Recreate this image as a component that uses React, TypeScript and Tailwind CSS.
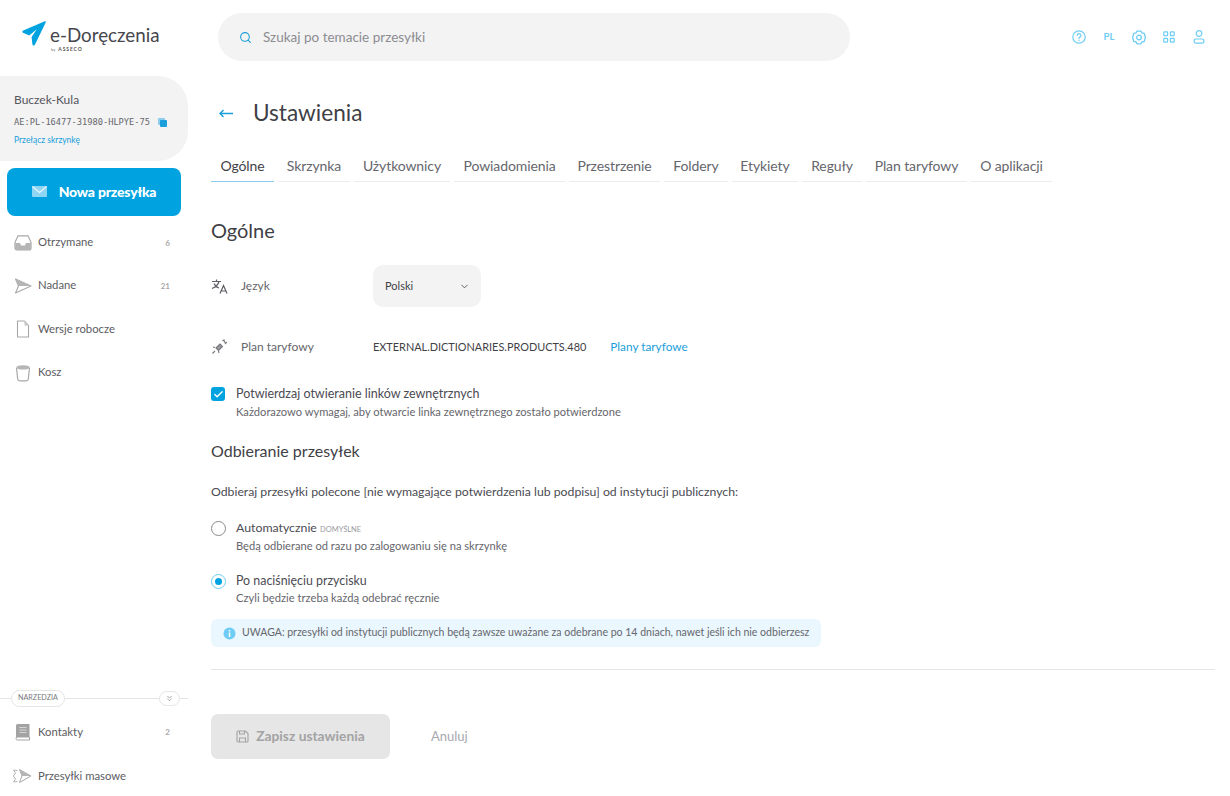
import React from "react";
import { Search, ChevronDown, Check, ChevronsDown } from "lucide-react";

const font = { fontFamily: "Lato, 'Noto Sans', sans-serif" };

function Logo() {
  return (
    <div className="flex flex-col">
      <div className="flex items-center gap-[4px]">
        <svg width="24" height="25" viewBox="0 0 24 25">
          <path d="M22.8 0.3 L1.2 9.6 C0.2 10.1 0.1 11.3 1 11.8 L7.2 14.6 L14.8 8.2 L9.6 16 L10.4 23.2 C10.6 24.8 12.4 25 13 23.6 L23.7 1.4 C24 0.6 23.5 0 22.8 0.3 Z" fill="#00a3e0" />
        </svg>
        <span className="text-[18.8px] leading-none text-[#46464c] mt-[3px]">e-Doręczenia</span>
      </div>
      <div className="ml-[29px] flex items-center gap-[3px] mt-[1px]">
        <span className="text-[4px] leading-none text-[#777]">by</span>
        <span className="text-[5px] leading-none text-[#555] font-bold tracking-[0.9px]">ASSECO</span>
      </div>
    </div>
  );
}

function Inbox() {
  return (
    <svg width="18" height="18" viewBox="0 0 18 18" fill="none">
      <path d="M4 1.800h10l3 6.500v5.700a2 2 0 0 1-2 2H3a2 2 0 0 1-2-2V8.300z" stroke="#a8a8a8" strokeWidth="1.200" />
      <path d="M1.200 9H6l1 2.500h4L12 9h4.800v5a2 2 0 0 1-2 2H3.200a2 2 0 0 1-2-2z" fill="#b5b5b5" />
    </svg>
  );
}
function Sent() {
  return (
    <svg width="18" height="18" viewBox="0 0 18 18" fill="none">
      <path d="M1.500 2l15.500 7-15.500 7 3-7z" stroke="#a8a8a8" strokeWidth="1.100" strokeLinejoin="round" />
      <path d="M1.500 2l15.500 7H4.500z" fill="#b5b5b5" />
    </svg>
  );
}
function Doc() {
  return (
    <svg width="18" height="18" viewBox="0 0 18 18" fill="none">
      <path d="M3.500 1h7l4 4.500v11.500h-11z" stroke="#a8a8a8" strokeWidth="1.100" strokeLinejoin="round" />
      <path d="M10.500 1v4.500h4" fill="#c5c5c5" />
    </svg>
  );
}
function Trash() {
  return (
    <svg width="18" height="18" viewBox="0 0 18 18" fill="none">
      <path d="M2.500 4l1.200 11a2 2 0 0 0 2 1.800h6.600a2 2 0 0 0 2-1.800L15.500 4" stroke="#a8a8a8" strokeWidth="1.200" />
      <ellipse cx="9" cy="3.400" rx="6.700" ry="2.200" fill="#b5b5b5" />
    </svg>
  );
}
function Book() {
  return (
    <svg width="18" height="18" viewBox="0 0 18 18" fill="none">
      <path d="M2 2.500A1.500 1.500 0 0 1 3.500 1H15.500v13H3.500A1.500 1.500 0 0 0 2 15.500z" fill="#a3a3a3" />
      <path d="M2 15.500A1.500 1.500 0 0 1 3.500 14H15.500v3H3.500A1.500 1.500 0 0 1 2 15.500z" stroke="#a3a3a3" strokeWidth="1" />
      <path d="M5.500 4.500h7M5.500 7h7M5.500 9.500h7" stroke="#d5d5d5" strokeWidth="1" />
    </svg>
  );
}
function Bulk() {
  return (
    <svg width="20" height="18" viewBox="0 0 20 18" fill="none" className="-ml-[2px]">
      <path d="M7.500 2.500l11.500 6.500-11.500 6.500 2.500-6.500z" stroke="#a8a8a8" strokeWidth="1" strokeLinejoin="round" />
      <path d="M7.500 2.500l11.500 6.500H10z" fill="#b5b5b5" />
      <path d="M5.500 3.500L1.500 3l2 3-2 3 2 3-2 3 4-.5" stroke="#b5b5b5" strokeWidth="1" />
    </svg>
  );
}

function NavItem({ icon, label, count, h = "h-[43.3px]" }: { icon: React.ReactNode; label: string; count?: string; h?: string }) {
  return (
    <div className={`flex items-center pl-[14px] pr-[18px] ${h}`}>
      <span className="w-[24px] flex justify-start">{icon}</span>
      <span className="text-[11.3px] text-[#5c5c62]">{label}</span>
      {count && <span className="ml-auto text-[8px] font-bold text-[#a8a8a8]">{count}</span>}
    </div>
  );
}

function Tab({ label, active, w }: { label: string; active?: boolean; w: string }) {
  return (
    <div className={`${w} h-[32px] flex items-center justify-center border-b ${active ? "border-[#8ccdee] text-[#3f3f46]" : "border-[#ececec] text-[#66666c]"} text-[14px] tracking-[-0.1px]`}>
      {label}
    </div>
  );
}

function TopIcons() {
  const c = "#6fcdf5";
  return (
    <div className="flex items-center gap-[16px] text-[#6fcdf5]">
      <svg width="14" height="14" viewBox="0 0 14 14" fill="none" stroke={c} strokeWidth="1.200">
        <circle cx="7" cy="7" r="6.200" />
        <path d="M5.300 5.500a1.800 1.800 0 1 1 2.600 1.600c-.6.3-.9.7-.9 1.300" strokeLinecap="round" />
        <path d="M7 10v.6" strokeLinecap="round" />
      </svg>
      <span className="w-[14px] text-center text-[9.5px] font-bold">PL</span>
      <svg width="14" height="15" viewBox="0 0 14 15" fill="none" stroke={c} strokeWidth="1.300">
        <path d="M5 1.200h4l1 1.700 2.200.4 1.200 4.200-1.200 4-2.200.4-1 1.900H5l-1-1.900-2.200-.4L.6 7.500l1.200-4.200L4 2.900z" strokeLinejoin="round" />
        <circle cx="7" cy="7.500" r="2.300" />
      </svg>
      <svg width="14" height="12" viewBox="-1 0 14 12" fill="none" stroke={c} strokeWidth="1.200">
        <rect x=".8" y=".8" width="3.800" height="3.800" rx=".6" />
        <rect x="7.400" y=".8" width="3.800" height="3.800" rx=".6" />
        <rect x=".8" y="7.400" width="3.800" height="3.800" rx=".6" />
        <rect x="7.400" y="7.400" width="3.800" height="3.800" rx=".6" />
      </svg>
      <svg width="14" height="14" viewBox="-1 0 14 14" fill="none" stroke={c} strokeWidth="1.200">
        <circle cx="6" cy="3.500" r="2.800" />
        <rect x="1" y="9" width="10" height="4.200" rx="2.100" />
      </svg>
    </div>
  );
}

export default function App() {
  return (
    <div className="w-[1230px] h-[796px] overflow-hidden bg-white flex text-[#3f3f46]" style={font}>
      <aside className="w-[188px] shrink-0 flex flex-col">
        <div className="h-[76px] pl-[22px] pt-[21px]">
          <Logo />
        </div>
        <div className="h-[85px] bg-[#f3f3f3] rounded-r-[30px] pl-[14px] pt-[16px]">
          <div className="text-[12px] leading-[16px] text-[#55555c]">Buczek-Kula</div>
          <div className="flex items-center gap-[8px] mt-[8px]">
            <span className="text-[8.7px] leading-[12px] text-[#66666c]" style={{ fontFamily: "'DejaVu Sans Mono', monospace" }}>AE:PL-16477-31980-HLPYE-75</span>
            <svg width="9" height="9" viewBox="0 0 9 9">
              <rect x="0" y="0" width="7" height="7" rx="1" fill="#8ccdee" />
              <rect x="2" y="2" width="7" height="7" rx="1" fill="#1b9fdc" />
            </svg>
          </div>
          <div className="text-[8.5px] leading-[12px] text-[#1b9fdc] mt-[6px]">Przełącz skrzynkę</div>
        </div>
        <div className="mx-[7px] mt-[7px] h-[48px] rounded-lg bg-[#00a3e0] flex items-center justify-center gap-[12px] text-white pb-[1px]">
          <svg width="15" height="11" viewBox="0 0 15 11">
            <rect width="15" height="11" rx="1" fill="#8fd6f5" />
            <path d="M0.500 0.500L7.500 6.500L14.500 0.500" stroke="#e8f7fd" strokeWidth="1.200" fill="none" />
          </svg>
          <span className="text-[14px] font-black tracking-[-0.2px]">Nowa przesyłka</span>
        </div>
        <div className="mt-[5px]">
          <NavItem icon={<Inbox />} label="Otrzymane" count="6" />
          <NavItem icon={<Sent />} label="Nadane" count="21" />
          <NavItem icon={<Doc />} label="Wersje robocze" />
          <NavItem icon={<Trash />} label="Kosz" />
        </div>
        <div className="mt-auto relative h-[18px] flex items-center mb-[3px]">
          <div className="w-full border-t border-[#e5e5e5]" />
          <span className="absolute left-[11px] h-[17px] px-[6px] rounded-full border border-[#e5e5e5] bg-white flex items-center text-[7.2px] text-[#77777c]">NARZEDZIA</span>
          <span className="absolute left-[159px] w-[21px] h-[15px] rounded-full border border-[#e5e5e5] bg-white flex items-center justify-center">
            <ChevronsDown size={9} className="text-[#888]" />
          </span>
        </div>
        <NavItem icon={<Book />} label="Kontakty" count="2" h="h-[44px]" />
        <NavItem icon={<Bulk />} label="Przesyłki masowe" h="h-[44px] -mb-[2px]" />
      </aside>
      <main className="flex-1 min-w-0 flex flex-col pl-[23px]">
        <div className="h-[76px] flex items-start pt-[13px] pr-[24px]">
          <div className="ml-[7px] w-[632px] h-[48px] rounded-[24px] bg-[#f3f3f3] flex items-center pl-[21px] gap-[11px]">
            <Search size={13} className="text-[#1b9fdc]" />
            <span className="text-[13.5px] text-[#8c8c92]">Szukaj po temacie przesyłki</span>
          </div>
          <div className="ml-auto h-[48px] flex items-center">
            <TopIcons />
          </div>
        </div>
        <div className="flex items-center h-[32px] mt-[21px]">
          <svg width="14" height="9" viewBox="0 0 14 9" fill="none" stroke="#1b9fdc" strokeWidth="1.400" className="ml-[8px]">
            <path d="M14 4.500H1M4.500 1L1 4.500 4.500 8" />
          </svg>
          <h1 className="ml-[20px] text-[22.6px] font-normal text-[#3f3f46]">Ustawienia</h1>
        </div>
        <div className="flex gap-[4px] mt-[21px]">
          <Tab label="Ogólne" active w="w-[63px]" />
          <Tab label="Skrzynka" w="w-[72px]" />
          <Tab label="Użytkownicy" w="w-[96px]" />
          <Tab label="Powiadomienia" w="w-[111px]" />
          <Tab label="Przestrzenie" w="w-[91px]" />
          <Tab label="Foldery" w="w-[64px]" />
          <Tab label="Etykiety" w="w-[66px]" />
          <Tab label="Reguły" w="w-[60px]" />
          <Tab label="Plan taryfowy" w="w-[101px]" />
          <Tab label="O aplikacji" w="w-[81px]" />
        </div>
        <h2 className="text-[20px] leading-[24px] mt-[36px] text-[#3f3f46]">Ogólne</h2>
        <div className="flex items-center h-[42px] mt-[23px]">
          <svg width="18" height="15" viewBox="0 0 18 15" fill="none" stroke="#5f5f66" strokeWidth="1.200" className="mr-[12px]">
            <path d="M1 2.500h9M5.500.5v2M8 2.500c-.8 3-3 5.500-7 7M3 4.500c1 2 3 4 5 4.500" />
            <path d="M9 14.500l3.500-8 3.500 8M10.200 12h4.600" />
          </svg>
          <span className="text-[12px] text-[#66666c] w-[132px]">Język</span>
          <div className="w-[108px] h-[42px] rounded-[10px] bg-[#f3f3f3] flex items-center justify-between pl-[12px] pr-[11px]">
            <span className="text-[11px] text-[#3f3f46]">Polski</span>
            <ChevronDown size={11} className="text-[#55555c]" />
          </div>
        </div>
        <div className="flex items-center h-[20px] mt-[30px]">
          <svg width="16" height="16" viewBox="0 0 16 16" fill="none" stroke="#77777c" strokeWidth="1.100" className="mr-[14px]">
            <path d="M5 9l4-4 2.500 2.500-4 4z" fill="#9a9aa0" />
            <path d="M1.500 14.500l2.500-2.500M11.500 2l1.500-1 .5 2 2 .5-1.500 1.500M2 8l2 .5M8 14l-.5-2" />
          </svg>
          <span className="text-[12px] text-[#66666c] w-[132px]">Plan taryfowy</span>
          <span className="text-[10.9px] text-[#3f3f46]">EXTERNAL.DICTIONARIES.PRODUCTS.480</span>
          <span className="text-[11.8px] text-[#1b9fdc] ml-[24px]">Plany taryfowe</span>
        </div>
        <div className="flex mt-[29px]">
          <span className="w-[14px] h-[14px] rounded-[3px] bg-[#00a3e0] flex items-center justify-center mt-[1px] mr-[11px]">
            <Check size={11} strokeWidth={3} className="text-white" />
          </span>
          <div>
            <div className="text-[12.5px] leading-[16px] text-[#4b4b52]">Potwierdzaj otwieranie linków zewnętrznych</div>
            <div className="text-[11.15px] leading-[14px] mt-[3px] text-[#66666c]">Każdorazowo wymagaj, aby otwarcie linka zewnętrznego zostało potwierdzone</div>
          </div>
        </div>
        <h3 className="text-[16px] leading-[20px] mt-[22px] text-[#3f3f46]">Odbieranie przesyłek</h3>
        <p className="text-[12.25px] leading-[16px] mt-[23px] text-[#4b4b52]">Odbieraj przesyłki polecone [nie wymagające potwierdzenia lub podpisu] od instytucji publicznych:</p>
        <div className="flex mt-[20px]">
          <span className="w-[15px] h-[15px] rounded-full border border-[#8a8a8a] mt-[1px] mr-[10px]" />
          <div>
            <div className="text-[12.3px] leading-[16px] text-[#4b4b52]">Automatycznie <span className="text-[7.5px] text-[#9a9aa0]">DOMYŚLNE</span></div>
            <div className="text-[11.15px] leading-[14px] mt-[1px] text-[#66666c]">Będą odbierane od razu po zalogowaniu się na skrzynkę</div>
          </div>
        </div>
        <div className="flex mt-[20px]">
          <span className="w-[15px] h-[15px] rounded-full border border-[#6fcdf5] mt-[1px] mr-[10px] flex items-center justify-center">
            <span className="w-[7px] h-[7px] rounded-full bg-[#00a3e0]" />
          </span>
          <div>
            <div className="text-[12.4px] leading-[16px] text-[#4b4b52]">Po naciśnięciu przycisku</div>
            <div className="text-[11.2px] leading-[14px] mt-[2px] text-[#66666c]">Czyli będzie trzeba każdą odebrać ręcznie</div>
          </div>
        </div>
        <div className="w-[610px] h-[28px] rounded-[6px] bg-[#eaf7fe] flex items-center pl-[12px] gap-[6px] mt-[14px]">
          <svg width="13" height="13" viewBox="0 0 13 13">
            <circle cx="6.500" cy="6.500" r="6" fill="#6fcdf5" />
            <rect x="5.800" y="5.500" width="1.500" height="4.500" fill="#fff" />
            <rect x="5.800" y="3" width="1.500" height="1.500" fill="#fff" />
          </svg>
          <span className="text-[10.54px] text-[#66666c]">UWAGA: przesyłki od instytucji publicznych będą zawsze uważane za odebrane po 14 dniach, nawet jeśli ich nie odbierzesz</span>
        </div>
        <div className="w-[1004px] border-t border-[#e5e5e5] mt-[22px]" />
        <div className="flex items-center mt-[44px]">
          <div className="w-[179px] h-[45px] rounded-[7px] bg-[#e6e6e6] flex items-center justify-center gap-[7px] text-[#a3a3a3]">
            <svg width="13" height="13" viewBox="0 0 13 13" fill="none" stroke="#a3a3a3" strokeWidth="1.100">
              <path d="M1 2a1 1 0 0 1 1-1h7.500L12 3.500V11a1 1 0 0 1-1 1H2a1 1 0 0 1-1-1z" />
              <path d="M3.500 1v3h5V1M3.500 12V8h6v4" />
            </svg>
            <span className="text-[13.8px] font-bold">Zapisz ustawienia</span>
          </div>
          <span className="ml-[41px] text-[13px] text-[#a8a8ae]">Anuluj</span>
        </div>
      </main>
    </div>
  );
}
